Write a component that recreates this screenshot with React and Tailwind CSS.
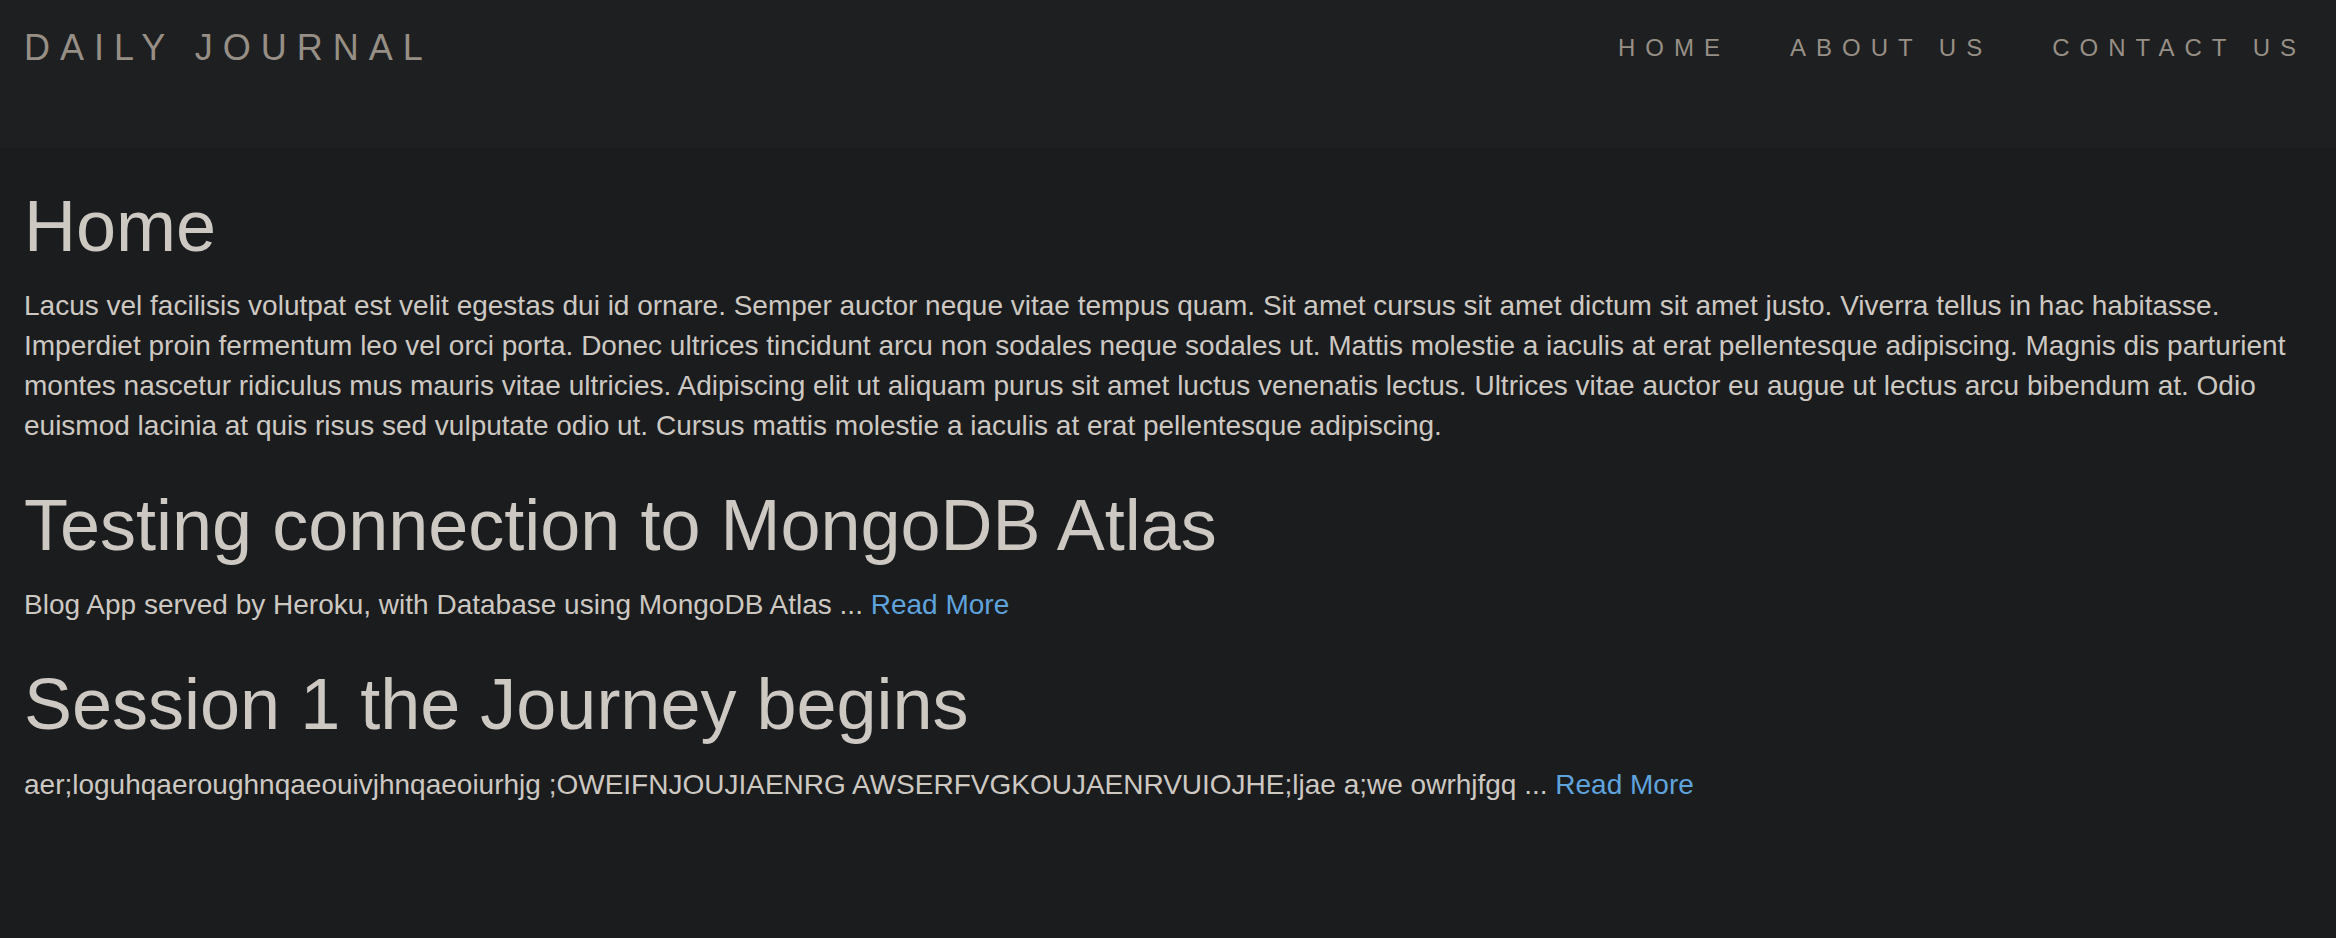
import React from 'react'

const NAV = ['Home', 'About Us', 'Contact Us']

const POSTS = [
  {
    title: 'Testing connection to MongoDB Atlas',
    body: 'Blog App served by Heroku, with Database using MongoDB Atlas',
  },
  {
    title: 'Session 1 the Journey begins',
    body: 'aer;loguhqaeroughnqaeouivjhnqaeoiurhjg ;OWEIFNJOUJIAENRG AWSERFVGKOUJAENRVUIOJHE;ljae a;we owrhjfgq',
  },
]

export default function App() {
  return (
    <div className="min-h-[938px] bg-[#1b1c1e] text-[#cdc8c2]" style={{ fontFamily: '"Liberation Sans", Arial, sans-serif' }}>
      {/* Navbar */}
      <header className="h-[148px] bg-[#1e1f21] flex items-start justify-between pt-[28px] pl-6">
        <a className="text-[36px] leading-[40px] tracking-[10px] uppercase text-[#978f85]">Daily Journal</a>
        <ul className="flex">
          {NAV.map((n) => (
            <li key={n}>
              <a className="block px-[30px] text-[24px] leading-[40px] tracking-[10px] uppercase text-[#978f85]">{n}</a>
            </li>
          ))}
        </ul>
      </header>

      {/* Content */}
      <main className="px-6 pt-[39px]">
        <h1 className="text-[72px] leading-[79.2px] mb-5">Home</h1>
        <p className="text-[28px] leading-[40px]">
          Lacus vel facilisis volutpat est velit egestas dui id ornare. Semper auctor neque vitae tempus quam. Sit amet cursus sit amet dictum sit amet justo. Viverra tellus in hac habitasse. Imperdiet proin fermentum leo vel orci porta. Donec ultrices tincidunt arcu non sodales neque sodales ut. Mattis molestie a iaculis at erat pellentesque adipiscing. Magnis dis parturient montes nascetur ridiculus mus mauris vitae ultricies. Adipiscing elit ut aliquam purus sit amet luctus venenatis lectus. Ultrices vitae auctor eu augue ut lectus arcu bibendum at. Odio euismod lacinia at quis risus sed vulputate odio ut. Cursus mattis molestie a iaculis at erat pellentesque adipiscing.
        </p>

        {POSTS.map((p) => (
          <div key={p.title}>
            <h1 className="text-[72px] leading-[79.2px] mt-10 mb-5">{p.title}</h1>
            <p className="text-[28px] leading-[40px]">
              {p.body} ... <a className="text-[#5fa3dd]">Read More</a>
            </p>
          </div>
        ))}
      </main>
    </div>
  )
}
